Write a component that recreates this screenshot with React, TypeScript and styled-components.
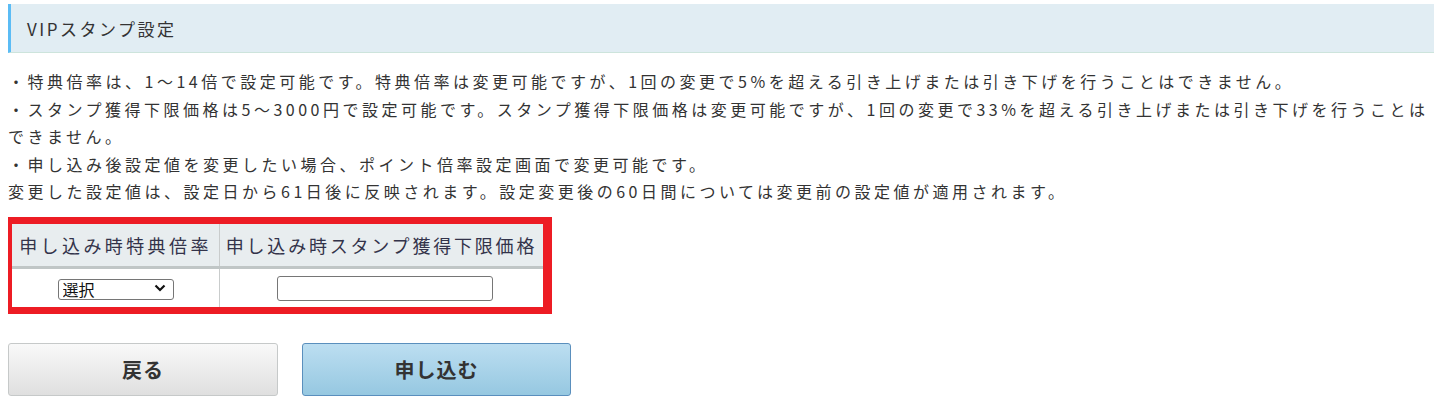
import styled, { createGlobalStyle } from 'styled-components';

const GlobalStyle = createGlobalStyle`
	body {
		margin: 4px 8px 0;
		background: #fff;
		color: #333;
		font-family: 'Noto Sans CJK JP', 'Noto Sans', sans-serif;
	}
`;

const App = () => {
	return (
		<>
			<GlobalStyle />
			<Page>
				<SectionTitle>VIPスタンプ設定</SectionTitle>

				<Notes>
					・特典倍率は、1〜14倍で設定可能です。特典倍率は変更可能ですが、1回の変更で5%を超える引き上げまたは引き下げを行うことはできません。
					<br />
					・スタンプ獲得下限価格は5〜3000円で設定可能です。スタンプ獲得下限価格は変更可能ですが、1回の変更で33%を超える引き上げまたは引き下げを行うことは
					<br />
					できません。
					<br />
					・申し込み後設定値を変更したい場合、ポイント倍率設定画面で変更可能です。
					<br />
					変更した設定値は、設定日から61日後に反映されます。設定変更後の60日間については変更前の設定値が適用されます。
				</Notes>

				<Highlight>
					<SettingTable>
						<thead>
							<tr>
								<HeadCell $width={207}>申し込み時特典倍率</HeadCell>
								<HeadCell
									$width={323}
									$spacing={2.8}>
									申し込み時スタンプ獲得下限価格
								</HeadCell>
							</tr>
						</thead>
						<tbody>
							<tr>
								<BodyCell>
									<SelectWrap>
										<Select defaultValue=''>
											<option value=''>選択</option>
											{Array.from({ length: 14 }, (_, i) => (
												<option key={i} value={i + 1}>
													{i + 1}倍
												</option>
											))}
										</Select>
										<Chevron
											width='12'
											height='8'
											viewBox='0 0 12 8'>
											<path
												d='M1.5 1.5 L6 6 L10.5 1.5'
												fill='none'
												stroke='#111'
												strokeWidth='2.2'
											/>
										</Chevron>
									</SelectWrap>
								</BodyCell>
								<BodyCell>
									<PriceInput type='text' />
								</BodyCell>
							</tr>
						</tbody>
					</SettingTable>
				</Highlight>

				<Actions>
					<Button $variant='back'>戻る</Button>
					<Button $variant='submit'>申し込む</Button>
				</Actions>
			</Page>
		</>
	);
};

export default App;

const Page = styled.div`
	display: flex;
	flex-direction: column;
	align-items: flex-start;
`;

const SectionTitle = styled.h2`
	align-self: stretch;
	margin: 0;
	height: 48px;
	display: flex;
	align-items: center;
	padding-left: 16px;
	background-color: #e1edf3;
	border-left: 3px solid #5bbcf5;
	border-bottom: 1px solid #cde4dc;
	font-size: 17px;
	font-weight: normal;
	letter-spacing: 2.5px;
	color: #333;
`;

const Notes = styled.p`
	margin: 15px 0 0;
	font-size: 16px;
	line-height: 27.5px;
	letter-spacing: 3.5px;
	white-space: nowrap;
	color: #333;
`;

const Highlight = styled.div`
	margin: 11px 0 0 -3px;
	border: 7px solid #ed1c24;
	border-right-width: 9px;
`;

const SettingTable = styled.table`
	border-collapse: collapse;
	table-layout: fixed;
`;

const HeadCell = styled.th<{ $width: number; $spacing?: number }>`
	width: ${({ $width }) => $width}px;
	height: 42px;
	padding: 0;
	background-color: #e8edef;
	border-bottom: 3px solid #c0c6c6;
	border-left: 1px solid #c9cccc;
	font-size: 18px;
	font-weight: normal;
	letter-spacing: ${({ $spacing = 3.4 }) => $spacing}px;
	color: #33334a;
	text-align: center;

	&:first-child {
		border-left: none;
	}
`;

const BodyCell = styled.td`
	height: 38px;
	padding: 0;
	text-align: center;
	vertical-align: middle;
	border-left: 1px solid #c9cccc;

	&:first-child {
		border-left: none;
	}
`;

const SelectWrap = styled.div`
	position: relative;
	display: inline-block;
	vertical-align: middle;
`;

const Select = styled.select`
	appearance: none;
	width: 116px;
	height: 21px;
	padding: 0 0 0 4px;
	border: 1px solid #767676;
	border-radius: 3px;
	background: #fff;
	font-family: 'Noto Sans CJK JP', sans-serif;
	font-size: 16px;
	line-height: 19px;
	color: #111;
`;

const Chevron = styled.svg`
	position: absolute;
	right: 8px;
	top: 7px;
	pointer-events: none;
`;

const PriceInput = styled.input`
	width: 216px;
	height: 25px;
	box-sizing: border-box;
	margin-left: 6px;
	border: 1px solid #767676;
	border-radius: 3px;
	vertical-align: middle;
`;

const Actions = styled.div`
	display: flex;
	gap: 24px;
	margin-top: 29px;
`;

const Button = styled.button<{ $variant: 'back' | 'submit' }>`
	width: ${({ $variant }) => ($variant === 'back' ? '270px' : '269px')};
	height: 53px;
	border-radius: 3px;
	border: 1px solid
		${({ $variant }) => ($variant === 'back' ? '#c6c9c9' : '#5a8fbd')};
	background: ${({ $variant }) =>
		$variant === 'back'
			? 'linear-gradient(#f9f9f9, #dfdfdf)'
			: 'linear-gradient(#bcdef1, #96c8e1)'};
	font-family: 'Noto Sans CJK JP', sans-serif;
	font-size: 20px;
	font-weight: bold;
	letter-spacing: 1px;
	color: #333;
	cursor: pointer;
`;
